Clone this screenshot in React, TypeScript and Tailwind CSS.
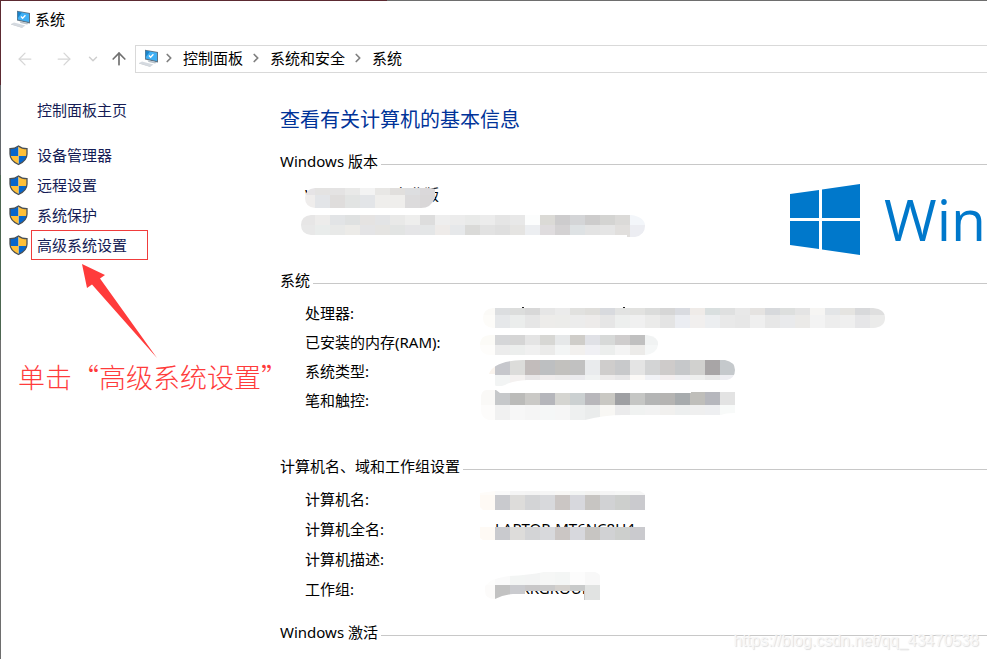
import { useId } from "react";
import type { ReactNode } from "react";
import { ArrowLeft, ArrowRight, ArrowUp, ChevronDown, ChevronRight } from "lucide-react";

type Band = { x?: number; y: number; h: number; colors: string };

// Cells are 15px wide; colors is a space separated list, one per cell.
function Mosaic({ bands, clip, children }: { bands: Band[]; clip: string; children?: ReactNode }) {
  const id = useId();
  return (
    <svg
      className="pointer-events-none absolute top-0 -left-4 overflow-visible"
      width="420"
      height="30"
      shapeRendering="crispEdges"
      aria-hidden="true"
    >
      <clipPath id={id}>
        <path d={clip} />
      </clipPath>
      <g clipPath={`url(#${id})`}>
        {bands.map((b) =>
          b.colors.split(" ").map((c, i) => (
            <rect key={`${b.y}-${i}`} x={(b.x ?? 0) + i * 15} y={b.y} width="15" height={b.h} fill={`#${c}`} />
          )),
        )}
      </g>
      {children}
    </svg>
  );
}

function ComputerIcon() {
  return (
    <svg width="20" height="18" viewBox="0 0 20 18" className="shrink-0" aria-hidden="true">
      <path d="M6 0.8 19 3v10.4L6 10.4z" fill="#5d7486" />
      <path d="M6.8 1.8 18 3.8v8.3L6.8 9.6z" fill="#3fb0f5" />
      <path d="M6.8 1.8 11 2.500 6.800 8z" fill="#1b83c9" />
      <path d="m10 6.500 1.600 1.700 2.800-3" fill="none" stroke="#fff" strokeWidth="1.3" />
      <path d="m8.500 11.200 6 1.400 3.500 1-2 1-6.500-1.600z" fill="#b9c2ca" />
      <path d="m0 14 3-1.400 11.500 3-3 1.800z" fill="#d5dae0" />
      <path d="m0 14 11.500 3.400v.6L0 14.600z" fill="#b4bbc2" />
    </svg>
  );
}

function ShieldIcon() {
  const outline = "M9.5 1C7 3 4 3.700 1 3.700V9c0 5 4 8.500 8.500 10.500C14 17.500 18 14 18 9V3.700C15 3.700 12 3 9.500 1z";
  const id = useId();
  return (
    <svg width="19" height="21" viewBox="0 0 19 21" className="shrink-0" aria-hidden="true">
      <clipPath id={id}>
        <path d={outline} />
      </clipPath>
      <g clipPath={`url(#${id})`}>
        <path d="M0 0h9.500v11H0zM9.500 11H19v10H9.500z" fill="#0666cc" />
        <path d="M9.500 0H19v11H9.500zM0 11h9.500v10H0z" fill="#ffc038" />
      </g>
      <path d={outline} fill="none" stroke="#4b5054" strokeWidth="1.300" />
    </svg>
  );
}

function WindowsLogo() {
  return (
    <svg width="70" height="71" viewBox="0 0 70 71" className="shrink-0" fill="#0078cb" aria-hidden="true">
      <path d="M0 10 29 6v28H0zM32 5.500 70 0v34H32zM0 37h29v28L0 61zM32 37h38v34l-38-5.500z" />
    </svg>
  );
}

const TASKS = ["设备管理器", "远程设置", "系统保护", "高级系统设置"];
const CRUMBS = ["控制面板", "系统和安全", "系统"];

function Legend({ children }: { children: ReactNode }) {
  return (
    <div className="flex h-5 items-center gap-[3px]">
      <h2 className="whitespace-nowrap">{children}</h2>
      <div className="mt-1.5 h-px flex-1 bg-[#c8c8c8]" />
    </div>
  );
}

function Row({ label, tall, children }: { label: string; tall?: boolean; children?: ReactNode }) {
  return (
    <div className={tall ? "flex h-[30px] items-center" : "flex h-[29px] items-center"}>
      <dt className="w-[190px] shrink-0 whitespace-nowrap">{label}</dt>
      <dd className="relative h-full flex-1 leading-7 whitespace-nowrap">{children}</dd>
    </div>
  );
}

function Sidebar() {
  return (
    <aside className="w-[279px] shrink-0 pt-4 text-[#151c55]">
      <a href="#home" className="ml-9 flex h-[30px] items-center">
        控制面板主页
      </a>
      <ul className="mt-[15px] pl-2">
        {TASKS.map((task, i) => (
          <li key={task} className="flex h-[30px] items-center gap-[3px]">
            <ShieldIcon />
            <a
              href="#task"
              className={[
                "flex h-[30px] items-center border pr-5 pl-[5px]",
                i === TASKS.length - 1 ? "border-[#f03c3c]" : "border-transparent",
              ].join(" ")}
            >
              {task}
            </a>
          </li>
        ))}
      </ul>
      {/* Callout */}
      <svg width="77" height="96" viewBox="0 0 77 96" className="mt-[3px] ml-20" fill="#ff3b3b" aria-hidden="true">
        <path d="M1 1 24 12l-5 3.500L76 95 11 21.500 6 25z" />
      </svg>
      <p className="ml-[17px] font-['Noto_Sans_CJK_SC',sans-serif] text-[27px] leading-9 font-light whitespace-nowrap text-[#ff3b3b]">
        单击“高级系统设置”
      </p>
    </aside>
  );
}

export default function App() {
  return (
    <div className="relative flex min-h-screen overflow-hidden bg-white font-['Noto_Sans','Noto_Sans_CJK_SC',sans-serif] text-[15px] text-black">
      {/* Sliver of desktop along the left edge */}
      <div className="flex w-px shrink-0 flex-col">
        <div className="h-[85px] bg-[#5c2a31]" />
        <div className="h-[90px] bg-[#63676b]" />
        <div className="h-[165px] bg-[#4c6650]" />
        <div className="flex-1 bg-[#6e6e6e]" />
      </div>

      <div className="min-w-0 flex-1">
        <div className="flex h-px">
          <div className="w-[386px] bg-[#5c2a31]" />
          <div className="flex-1 bg-[#6e6e6e]" />
        </div>

        <header className="mb-0.5 flex h-9 items-center gap-1 pl-2.5">
          <ComputerIcon />
          <h1>系统</h1>
        </header>

        <nav className="flex h-10 items-center">
          <div className="flex w-[134px] shrink-0 items-center pl-3.5">
            <button aria-label="后退" className="text-[#d6d6d6]">
              <ArrowLeft size={20} strokeWidth={1.5} />
            </button>
            <button aria-label="前进" className="ml-[19px] text-[#d6d6d6]">
              <ArrowRight size={20} strokeWidth={1.5} />
            </button>
            <button aria-label="最近的位置" className="ml-3 text-[#cfcfcf]">
              <ChevronDown size={14} strokeWidth={2.5} />
            </button>
            <button aria-label="向上" className="ml-[9px] text-[#707070]">
              <ArrowUp size={20} strokeWidth={2} />
            </button>
          </div>
          <div className="flex h-7 flex-1 items-center border border-r-0 border-[#d9d9d9] pb-0.5 pl-[3px]">
            <ComputerIcon />
            {CRUMBS.map((crumb) => (
              <div key={crumb} className="flex items-center">
                <ChevronRight size={14} strokeWidth={3} className="mr-1 ml-[3px] text-[#808080]" />
                <a href="#crumb" className="mr-[3px] ml-[3px] whitespace-nowrap">
                  {crumb}
                </a>
              </div>
            ))}
          </div>
        </nav>

        <div className="flex">
          <Sidebar />

          <main className="min-w-0 flex-1 pt-[27px]">
            <p className="text-xl leading-7 text-[#003399]">查看有关计算机的基本信息</p>

            <section className="mt-[17px]">
              <Legend>Windows 版本</Legend>
              <div className="mt-[9px] flex justify-between">
                <div className="pl-[25px] leading-7 whitespace-nowrap">
                  <p className="relative h-[30px]">
                    Windows 10 专业版
                    <Mosaic
                      clip="M26 8h112q6 0 8 1v9q-4 10-14 10H26q-10-1-10-10t10-10z"
                      bands={[
                        { x: 11, y: 8, h: 7, colors: "e6e4e6 e4e3e2 e4e3e3 e9e9e8 f3f3f3 e8e7e5 e1dfdd dddee0 dad8da" },
                        { x: 11, y: 15, h: 13, colors: "efedec e3e5e8 dfdddc e2e4e3 e3e5e8 efeeec efeeec dcdbdc d9d7d8" },
                      ]}
                    />
                  </p>
                  <p className="relative h-[30px]">
                    <Mosaic
                      clip="M22 5h320q14 2 14 11t-10 11h-8v-2H22q-10-1-10-10t10-10z"
                      bands={[
                        {
                          x: 11,
                          y: 5,
                          h: 10,
                          colors:
                            "e7e6e6 edeceb e2e4e6 dfe1e1 e5e3e2 e3e4e6 e9e9e8 eeeeed dddddd eeeeee ececec e9eae9 ececec e5e5e5 e8e8e8 fcfdfd dbdad6 cdcccd d4d5d7 cdcccc d4d4d2 dbdad8 f3f6fa",
                        },
                        {
                          x: 11,
                          y: 15,
                          h: 12,
                          colors:
                            "e8e8e8 e9eceb e8e9e8 ecebe8 e4e4e6 e5e4e2 e2e4e3 e5e5e7 e4e6e7 eeebe9 e6e8ea dadad8 e2e2e2 dfdfdf e5e4e2 eceef1 dfdcde d4d2d3 dee2e4 e3e3e3 e5e5e5 e1dfdd ecedf2",
                        },
                      ]}
                    />
                  </p>
                </div>
                <div className="mt-1 flex h-[71px] w-[197px] items-center text-[#0078cb]">
                  <WindowsLogo />
                  <span className="ml-6 font-['Open_Sans',sans-serif] text-[57px] leading-[71px]">Win</span>
                </div>
              </div>
            </section>

            <section className="mt-[15px]">
              <Legend>系统</Legend>
              <dl className="mt-[9px] pl-[25px]">
                <Row label="处理器:">
                  <Mosaic
                    clip="M14 9h380q12 1 12 10t-12 10H14q-10-1-10-10t10-10z"
                    bands={[
                      {
                        x: 1,
                        y: 9,
                        h: 7,
                        colors:
                          "fbfaf7 dcdee0 dcdddc d8d8d8 e6e6e6 ebebeb e1e1df dfdedb d8dade e2e3e2 e2e2e0 dbdcdb d6d6d6 d9dbe0 efebe8 d9dfdf dfe0e0 e8e8e8 e5e3e1 d7d9dc dddfde e4e4e4 f6f5f3 e3e5e7 e5e4e1 d8d9db dfdfdf",
                      },
                      {
                        x: 1,
                        y: 16,
                        h: 13,
                        colors:
                          "fdfcf9 e6e8ea ebedec e6e6e6 edecea ececea ececec edebea e6e6e6 edefee f0f0f0 ebebea e4e4e4 ebedf2 f1efee eceef0 e9e9e9 e7e7e7 efefef e7e7e7 e9eaec ebeae8 f3f3f3 ededed efefef e6e6e8 ebebea",
                      },
                    ]}
                  >
                    <path d="M43 8h2v1h-2zM144 8h2v1h-2z" fill="#222" />
                  </Mosaic>
                </Row>
                <Row label="已安装的内存(RAM):">
                  <Mosaic
                    clip="M12 7h156q12 2 11 10t-12 10H12Q1 27 1 17T12 7z"
                    bands={[
                      { x: 1, y: 7, h: 10, colors: "fcfbf7 d5d6d8 d5d5d5 e4e4e4 d7d7d4 e6e8e9 cfcdc9 e0e1e6 d7d9d8 cfcdcd c0c0c0 f1f3f3" },
                      { x: 1, y: 17, h: 10, colors: "fefdfb ececec eceeed f0f0f0 ebebea f3f5f5 f2f0ee f0f0f4 eceeed f4f4f4 ecebe9 f5f7f7" },
                    ]}
                  />
                </Row>
                <Row label="系统类型:">
                  <Mosaic
                    clip="M10 17Q14 4 44 3h202q10 2 10 10t-8 10H48q-15 1-22 5-10 4-10-1V17z"
                    bands={[
                      {
                        x: 1,
                        y: 3,
                        h: 15,
                        colors:
                          "faf4ee c6c7cc dcdcda c2bcbb bdbfc1 c2c1be c1c1c1 e9ebed cfcdcc c8c9cb e4e4e4 d3d4d5 cecbca c6c8ca d1d1cf a8a5a6 c5c9cc",
                      },
                      {
                        x: 1,
                        y: 18,
                        h: 11,
                        colors:
                          "fcfaf8 f2f4f4 f4f1f0 e8e6e7 efecec ecebeb ebebee f0f2f2 edebeb e8e7e8 fbf9f7 f1f2f6 f3eeef efeff2 eeefee e8e8e8 eeeef2",
                      },
                    ]}
                  />
                </Row>
                <Row label="笔和触控:">
                  <Mosaic
                    clip="M8 4h9l4 3h191V6h44v21q-10 0-14 2h-98q-18 0-38 5H10Q2 32 2 24V12q0-8 6-8z"
                    bands={[
                      {
                        x: 1,
                        y: 4,
                        h: 15,
                        colors:
                          "faf9f7 c6c8ca bbbbb9 cac9c6 b5b6bb d5d5d1 cbd0d1 b8b7bb c9c8c3 9fa0a3 c5c6c4 b4b5b5 b5b4b2 a7abad bfbeba b6b7bd e3e3e3",
                      },
                      {
                        x: 1,
                        y: 19,
                        h: 15,
                        colors:
                          "fdfcfb f1f1f1 f7f7f7 f5f5f5 f5f7f7 f6f6f6 eef0f0 eaecec f8f7f4 ebebec f0f2f1 f2f2f2 f1f0ee edefef efefef eeeff1 f8faf9",
                      },
                    ]}
                  />
                </Row>
              </dl>
            </section>

            <section className="mt-[41px]">
              <Legend>计算机名、域和工作组设置</Legend>
              <dl className="mt-2 pl-[25px]">
                <Row tall label="计算机名:">
                  <Mosaic
                    clip="M1 9l15-2h145l5 3v16H4l-3-3z"
                    bands={[
                      { x: 1, y: 7, h: 4, colors: "fefcf9 fafafa f5f5f5 f4f4f4 f6f6f6 f8f7f5 f3f5f4 f3f3f1 f5f5f5 f6f7f6 f7f7f7" },
                      { x: 1, y: 11, h: 15, colors: "fefaf5 c9cace dddcda d3d4d6 d8d9dc cbc6c4 d7d8dd c7c5c2 d1d2d4 cdcfcd cacace" },
                    ]}
                  />
                </Row>
                <Row tall label="计算机全名:">
                  LAPTOP-MT6NC8U4
                  <Mosaic
                    clip="M1 13h165v13H4l-3-2z"
                    bands={[
                      { x: 1, y: 13, h: 13, colors: "fefaf5 c9cace dddcda d3d4d6 d8d9dc cbc6c4 d7d8dd c7c5c2 d1d2d4 cdcfcd cacace" },
                    ]}
                  />
                </Row>
                <Row tall label="计算机描述:" />
                <Row tall label="工作组:">
                  WORKGROUP
                  <Mosaic
                    clip="M6 12Q12 4 30 2q20-1 35-4h51q5 2 5 4v24h-16v-9H46v3h-12q-10 1-18 5-10 0-10-8z"
                    bands={[
                      { x: 1, y: -2, h: 13, colors: "fdfdfc fafafa f3f5f4 f3f4f4 f6f7f6 f4f6f5 fcfcfc f8f8f8" },
                      { x: 1, y: 11, h: 15, colors: "fcfbfa c2c2c2 cacbcf c8c7c8 cacaca d4d1cd c8caca e1e3e2" },
                    ]}
                  />
                </Row>
              </dl>
            </section>

            <section className="mt-[18px]">
              <Legend>Windows 激活</Legend>
            </section>
          </main>
        </div>
      </div>

      <div className="absolute right-2 bottom-2 font-['Liberation_Sans',sans-serif] text-base leading-5 text-[#f7f7f7] [text-shadow:1px_1px_1px_#dcdcdc]">
        https://blog.csdn.net/qq_43470538
      </div>
    </div>
  );
}
